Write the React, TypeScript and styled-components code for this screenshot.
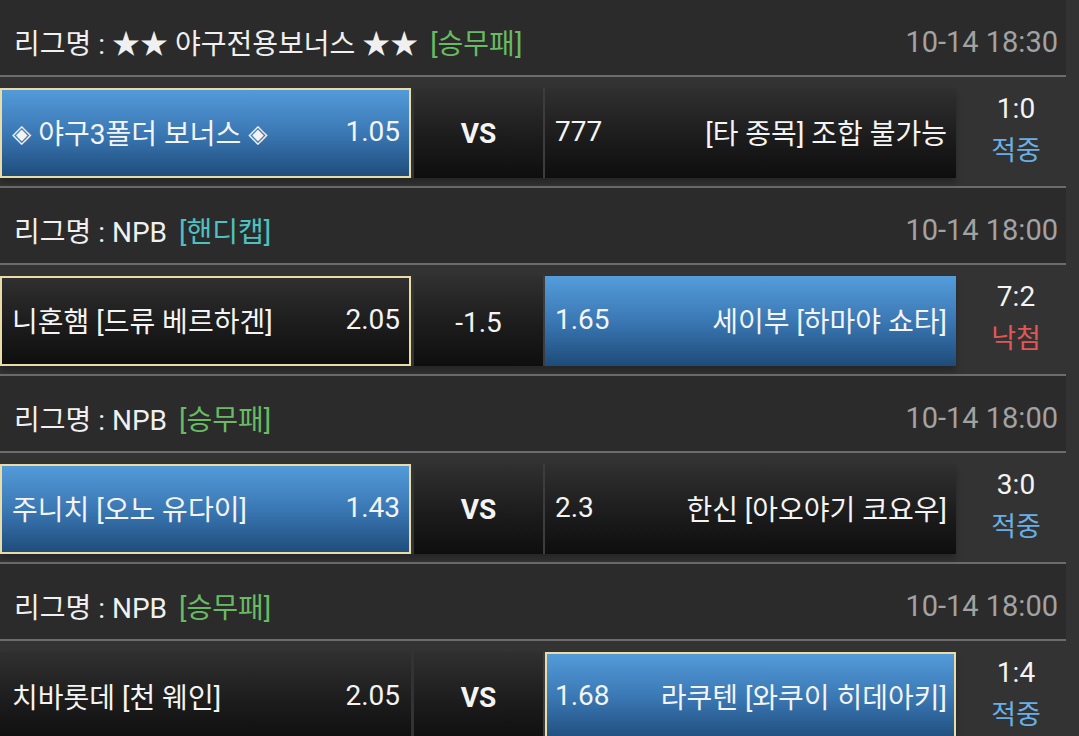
import React from "react";
import styled, { createGlobalStyle, css } from "styled-components";

const GlobalStyle = createGlobalStyle`
  html, body {
    margin: 0;
    padding: 0;
    background: #333333;
    overflow: hidden;
  }
  body {
    font-family: Roboto, "Noto Sans CJK KR", sans-serif;
  }
`;

const Page = styled.div`
  width: 1079px;
  height: 736px;
  overflow: hidden;
  background: #333333;
`;

const List = styled.div`
  margin-right: 13px;
  display: flex;
  flex-direction: column;
`;

const Header = styled.div`
  height: 77px;
  flex-shrink: 0;
  box-sizing: border-box;
  padding: 8px 8px 0 14px;
  display: flex;
  align-items: center;
  justify-content: space-between;
  background: #2b2b2b;
  border-bottom: 2px solid #6c6c6c;
  font-size: 28px;
  white-space: nowrap;
`;

const League = styled.span`
  color: #f0f0f0;
`;

const Tag = styled.span<{ $kind: "wdl" | "hc" }>`
  margin-left: 12px;
  color: ${(p) => (p.$kind === "wdl" ? "#68bb62" : "#4ec2c0")};
`;

const Time = styled.span`
  color: #a2a2a2;
  font-size: 29px;
`;

const Row = styled.div`
  height: 111px;
  flex-shrink: 0;
  box-sizing: border-box;
  padding-top: 11px;
  display: flex;
  background: #333333;
  border-bottom: 2px solid #6c6c6c;
`;

const Cells = styled.div`
  height: 90px;
  display: flex;
  box-shadow: 0 5px 6px rgba(0, 0, 0, 0.25);
`;

const blueBg = css`
  background: linear-gradient(180deg, #559cdb 0%, #3a78b4 50%, #1e4b79 100%);
`;
const darkBg = css`
  background: linear-gradient(180deg, #303030 0%, #1c1c1c 55%, #0e0e0e 100%);
`;

const TeamCell = styled.div<{ $blue?: boolean; $picked?: boolean; $away?: boolean }>`
  width: 411px;
  box-sizing: border-box;
  display: flex;
  align-items: center;
  justify-content: space-between;
  padding: 0 ${(p) => (p.$away ? "9px" : "11px")} 3px ${(p) => (p.$away ? "10px" : "12px")};
  color: #f4f4f4;
  font-size: 28px;
  white-space: nowrap;
  ${(p) => (p.$blue ? blueBg : darkBg)};
  box-shadow: ${(p) => (p.$picked ? "inset 0 0 0 2px #eadca6" : "none")};
`;

const Diamond = styled.span`
  font-size: 25px;
  font-family: "DejaVu Sans", sans-serif;
  position: relative;
  top: -2px;
`;

const Odds = styled.span`
  font-size: 28px;
`;

const Mid = styled.div`
  width: 129px;
  margin-left: 3px;
  margin-right: 2px;
  display: flex;
  align-items: center;
  justify-content: center;
  color: #f4f4f4;
  font-size: 28px;
  ${darkBg};
  box-shadow: 2px 0 0 #3d3d3d;
`;

const Vs = styled.span`
  font-weight: 700;
  font-size: 28px;
  margin-top: 1px;
`;

const Handicap = styled.span`
  margin-top: 2px;
`;

const Score = styled.div`
  flex: 1;
  display: flex;
  flex-direction: column;
  align-items: center;
  justify-content: center;
  margin-top: -14px;
  padding-left: 10px;
  font-size: 27px;
  line-height: 43px;
`;

const ScoreNum = styled.span`
  color: #f4f4f4;
  font-size: 28px;
`;

const Result = styled.span<{ $win: boolean }>`
  color: ${(p) => (p.$win ? "#6aaee6" : "#e25656")};
`;

type Game = {
  league: string;
  kind: "wdl" | "hc";
  time: string;
  home: React.ReactNode;
  homeOdds: string;
  mid: string;
  away: string;
  awayOdds: string;
  homeBlue: boolean;
  homePicked: boolean;
  awayBlue: boolean;
  awayPicked: boolean;
  score: string;
  win: boolean;
};

const games: Game[] = [
  {
    league: "★★ 야구전용보너스 ★★",
    kind: "wdl",
    time: "10-14 18:30",
    home: (
      <>
        <Diamond>◈</Diamond> 야구3폴더 보너스 <Diamond>◈</Diamond>
      </>
    ),
    homeOdds: "1.05",
    mid: "VS",
    away: "[타 종목] 조합 불가능",
    awayOdds: "777",
    homeBlue: true,
    homePicked: true,
    awayBlue: false,
    awayPicked: false,
    score: "1:0",
    win: true,
  },
  {
    league: "NPB",
    kind: "hc",
    time: "10-14 18:00",
    home: "니혼햄 [드류 베르하겐]",
    homeOdds: "2.05",
    mid: "-1.5",
    away: "세이부 [하마야 쇼타]",
    awayOdds: "1.65",
    homeBlue: false,
    homePicked: true,
    awayBlue: true,
    awayPicked: false,
    score: "7:2",
    win: false,
  },
  {
    league: "NPB",
    kind: "wdl",
    time: "10-14 18:00",
    home: "주니치 [오노 유다이]",
    homeOdds: "1.43",
    mid: "VS",
    away: "한신 [아오야기 코요우]",
    awayOdds: "2.3",
    homeBlue: true,
    homePicked: true,
    awayBlue: false,
    awayPicked: false,
    score: "3:0",
    win: true,
  },
  {
    league: "NPB",
    kind: "wdl",
    time: "10-14 18:00",
    home: "치바롯데 [천 웨인]",
    homeOdds: "2.05",
    mid: "VS",
    away: "라쿠텐 [와쿠이 히데아키]",
    awayOdds: "1.68",
    homeBlue: false,
    homePicked: false,
    awayBlue: true,
    awayPicked: true,
    score: "1:4",
    win: true,
  },
];

export default function App() {
  return (
    <Page>
      <GlobalStyle />
      <List>
        {games.map((g, i) => (
          <React.Fragment key={i}>
            <Header>
              <span>
                <League>리그명 : {g.league}</League>
                <Tag $kind={g.kind}>{g.kind === "wdl" ? "[승무패]" : "[핸디캡]"}</Tag>
              </span>
              <Time>{g.time}</Time>
            </Header>
            <Row>
              <Cells>
                <TeamCell $blue={g.homeBlue} $picked={g.homePicked}>
                  <span>{g.home}</span>
                  <Odds>{g.homeOdds}</Odds>
                </TeamCell>
                <Mid>{g.mid === "VS" ? <Vs>VS</Vs> : <Handicap>{g.mid}</Handicap>}</Mid>
                <TeamCell $away $blue={g.awayBlue} $picked={g.awayPicked}>
                  <Odds>{g.awayOdds}</Odds>
                  <span>{g.away}</span>
                </TeamCell>
              </Cells>
              <Score>
                <ScoreNum>{g.score}</ScoreNum>
                <Result $win={g.win}>{g.win ? "적중" : "낙첨"}</Result>
              </Score>
            </Row>
          </React.Fragment>
        ))}
      </List>
    </Page>
  );
}
